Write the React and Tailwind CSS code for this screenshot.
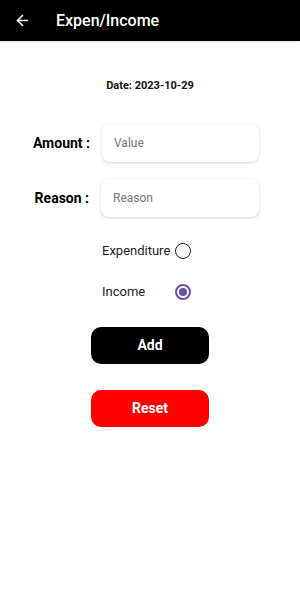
import { ArrowLeft } from 'lucide-react';

function Radio({ checked }) {
  return (
    <span className="flex h-4 w-4 items-center justify-center rounded-full border-[1.5px] border-[#1a1a1a] data-[on=true]:border-2 data-[on=true]:border-[#6a4fb0]" data-on={checked}>
      {checked && <span className="h-2 w-2 rounded-full bg-[#6a4fb0]" />}
    </span>
  );
}

export default function App() {
  return (
    <div className="flex h-[608px] w-[300px] flex-col bg-white font-['Roboto',sans-serif]">
      <div className="flex h-[41px] items-center bg-black text-white shadow">
        <ArrowLeft className="ml-[14px] h-[17px] w-[17px]" strokeWidth={2.2} />
        <span className="ml-[25px] text-[16px] font-medium">Expen/Income</span>
      </div>

      <div className="mt-[37px] text-center text-[11px] font-bold leading-4 text-[#111]">Date: 2023-10-29</div>

      <div className="mt-[30px] grid grid-cols-[90px_157px] items-center gap-x-[12px] gap-y-[17px]">
        <span className="text-right text-[14px] font-bold text-black">Amount :</span>
        <div className="flex h-[38px] items-center rounded-[8px] bg-white px-3 text-[12px] text-[#777] shadow-[0_1px_3px_rgba(0,0,0,0.18)]">Value</div>
        <span className="pr-[1px] text-right text-[14px] font-bold text-black">Reason :</span>
        <div className="-ml-[1px] flex h-[38px] items-center rounded-[8px] bg-white px-3 text-[12px] text-[#777] shadow-[0_1px_3px_rgba(0,0,0,0.18)]">Reason</div>
      </div>

      <div className="mt-[26px] flex flex-col gap-[25px] pl-[102px] text-[13px] text-[#222]">
        <label className="flex h-4 items-center">
          <span className="w-[73px]">Expenditure</span>
          <Radio checked={false} />
        </label>
        <label className="flex h-4 items-center">
          <span className="w-[73px]">Income</span>
          <Radio checked />
        </label>
      </div>

      <div className="mt-[27px] flex flex-col items-center gap-[26px]">
        <button className="h-[37px] w-[118px] rounded-[10px] bg-black text-[14px] font-bold text-white">Add</button>
        <button className="h-[37px] w-[118px] rounded-[10px] bg-[#ff0000] text-[14px] font-bold text-white">Reset</button>
      </div>
    </div>
  );
}
